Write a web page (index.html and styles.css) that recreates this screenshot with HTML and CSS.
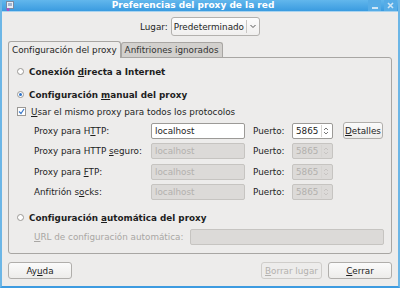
FILE: index.html
```html
<!DOCTYPE html>
<html lang="es">
<head>
    <meta charset="UTF-8">
    <title>Preferencias del proxy de la red</title>
    <link rel="stylesheet" href="styles.css">
</head>
<body>

<div class="window">
    <div class="titlebar">
        <svg class="app-icon" width="10" height="10" viewBox="0 0 10 10">
            <rect x="1.5" y="0.5" width="7" height="7" fill="#e8eef6" stroke="#7a8aa0"/>
            <rect x="3" y="2" width="4" height="3" fill="#9fb4d0"/>
            <circle cx="3" cy="8.5" r="1.5" fill="#b04cc0"/>
        </svg>
        <span class="title">Preferencias del proxy de la red</span>
        <div class="wm-buttons">
            <span class="wm-btn"><span class="wm-min"></span></span>
            <span class="wm-btn">
                <svg width="7" height="7" viewBox="0 0 7 7">
                    <path d="M1 1 L6 6 M6 1 L1 6" stroke="#cfe6f6" stroke-width="1.6"/>
                </svg>
            </span>
        </div>
    </div>

    <div class="content">
        <div class="location">
            <span>Lugar:</span>
            <div class="combo">
                <span class="combo-text">Predeterminado</span>
                <span class="combo-sep"></span>
                <svg width="6" height="5" viewBox="0 0 6 5">
                    <path d="M0.5 1 L3 3.5 L5.5 1" fill="none" stroke="#555" stroke-width="1"/>
                </svg>
            </div>
        </div>

        <div class="tabs">
            <div class="tab active">Configuración del proxy</div>
            <div class="tab">Anfitriones ignorados</div>
        </div>

        <div class="panel">
            <div class="option"><span class="radio"></span><b>Conexión <u>d</u>irecta a Internet</b></div>
            <div class="option manual"><span class="radio on"></span><b>Configuración <u>m</u>anual del proxy</b></div>
            <div class="option check-row">
                <span class="check">
                    <svg width="7" height="7" viewBox="0 0 7 7">
                        <path d="M1 3.5 L3 5.5 L6 1" fill="none" stroke="#3a78c8" stroke-width="1.2"/>
                    </svg>
                </span>
                <span><u>U</u>sar el mismo proxy para todos los protocolos</span>
            </div>

            <div class="proxy-grid">
                <span class="lbl">Proxy para H<u>T</u>TP:</span>
                <span class="entry">localhost</span>
                <span class="lbl port">Puerto:</span>
                <span class="spin"><span>5865</span><svg class="arrows" width="8" height="12" viewBox="0 0 8 12"><path d="M2 5 L4 3 L6 5 M2 7 L4 9 L6 7" fill="none" stroke="currentColor" stroke-width="0.9"/></svg></span>
                <span class="btn details"><u>D</u>etalles</span>

                <span class="lbl">Proxy para HTTP <u>s</u>eguro:</span>
                <span class="entry off">localhost</span>
                <span class="lbl port">Puerto:</span>
                <span class="spin off"><span>5865</span><svg class="arrows" width="8" height="12" viewBox="0 0 8 12"><path d="M2 5 L4 3 L6 5 M2 7 L4 9 L6 7" fill="none" stroke="currentColor" stroke-width="0.9"/></svg></span>
                <span></span>

                <span class="lbl">Proxy para <u>F</u>TP:</span>
                <span class="entry off">localhost</span>
                <span class="lbl port">Puerto:</span>
                <span class="spin off"><span>5865</span><svg class="arrows" width="8" height="12" viewBox="0 0 8 12"><path d="M2 5 L4 3 L6 5 M2 7 L4 9 L6 7" fill="none" stroke="currentColor" stroke-width="0.9"/></svg></span>
                <span></span>

                <span class="lbl">Anfitrión s<u>o</u>cks:</span>
                <span class="entry off">localhost</span>
                <span class="lbl port">Puerto:</span>
                <span class="spin off"><span>5865</span><svg class="arrows" width="8" height="12" viewBox="0 0 8 12"><path d="M2 5 L4 3 L6 5 M2 7 L4 9 L6 7" fill="none" stroke="currentColor" stroke-width="0.9"/></svg></span>
                <span></span>
            </div>

            <div class="option auto"><span class="radio"></span><b>Configuración <u>a</u>utomática del proxy</b></div>
            <div class="url-row">
                <span class="lbl off"><u>U</u>RL de configuración automática:</span>
                <span class="entry off url"></span>
            </div>
        </div>

        <div class="actions">
            <span class="btn">Ay<u>u</u>da</span>
            <span class="spacer"></span>
            <span class="btn disabled"><u>B</u>orrar lugar</span>
            <span class="btn"><u>C</u>errar</span>
        </div>
    </div>
</div>

</body>
</html>
```

FILE: styles.css
```css
    body {
        margin: 0;
        font-family: 'DejaVu Sans', sans-serif;
        font-size: 8.8px;
        color: #1e1e1e;
        background-color: #edeceb;
    }
    .window {
        width: 400px;
        height: 288px;
        box-sizing: border-box;
        border-left: 2px solid #6cb6e6;
        border-right: 2px solid #6cb6e6;
        border-bottom: 2px solid #3d9be0;
        background-color: #edeceb;
        display: flex;
        flex-direction: column;
        overflow: hidden;
    }
    .titlebar {
        height: 11px;
        margin: 0 -2px;
        display: flex;
        align-items: center;
        background: linear-gradient(#62b7ec, #3a9be0);
        border-bottom: 1px solid #a9d3ef;
    }
    .app-icon {
        margin-left: 5px;
        margin-right: 3px;
    }
    .title {
        flex: 1;
        text-align: center;
        color: white;
        font-weight: bold;
        font-size: 9px;
        line-height: 11px;
    }
    .wm-buttons {
        display: flex;
        gap: 3px;
        margin-right: 3px;
    }
    .wm-btn {
        width: 13px;
        height: 11px;
        background-color: #56ace6;
        display: flex;
        align-items: center;
        justify-content: center;
    }
    .wm-min {
        width: 6px;
        height: 2px;
        background-color: #cfe6f6;
        margin-top: 4px;
    }
    .content {
        flex: 1;
        padding: 0 6px;
        display: flex;
        flex-direction: column;
    }
    .location {
        display: flex;
        align-items: center;
        justify-content: center;
        gap: 3px;
        margin-top: 5px;
    }
    .combo {
        display: flex;
        align-items: center;
        height: 19px;
        box-sizing: border-box;
        border: 1px solid #b3b1ae;
        border-radius: 3px;
        background: linear-gradient(#fdfdfd, #f0efee);
        padding: 0 3px 0 2px;
    }
    .combo-sep {
        width: 1px;
        height: 13px;
        background-color: #c9c7c4;
        margin: 0 3px 0 2px;
    }
    .tabs {
        display: flex;
        align-items: flex-end;
        margin-top: 4px;
        height: 17px;
    }
    .tab {
        height: 15px;
        line-height: 15px;
        padding: 0 3px;
        box-sizing: border-box;
        background-color: #d2d0cd;
        border: 1px solid #a8a6a3;
        border-bottom: none;
        border-radius: 3px 3px 0 0;
        color: #333;
    }
    .tab.active {
        height: 17px;
        line-height: 16px;
        background-color: #edeceb;
        margin-bottom: -1px;
        position: relative;
        z-index: 1;
        color: #1e1e1e;
    }
    .panel {
        border: 1px solid #a8a6a3;
        border-radius: 0 3px 3px 3px;
        height: 197px;
        box-sizing: border-box;
        padding: 8px 0 0 8px;
    }
    .option {
        display: flex;
        align-items: center;
        gap: 5px;
        height: 11px;
    }
    .manual {
        margin-top: 12px;
    }
    .check-row {
        margin-top: 6px;
    }
    .radio {
        width: 5px;
        height: 5px;
        border: 1px solid #9a9895;
        border-radius: 50%;
        background-color: white;
        position: relative;
    }
    .radio.on::after {
        content: "";
        position: absolute;
        left: 1px;
        top: 1px;
        width: 3px;
        height: 3px;
        border-radius: 50%;
        background-color: #2c72c7;
    }
    .check {
        width: 7px;
        height: 7px;
        border: 1px solid #9a9895;
        background-color: white;
        display: flex;
    }
    .proxy-grid {
        display: grid;
        grid-template-columns: 117px 94px 47px 41px 50px;
        grid-auto-rows: 16px;
        row-gap: 4.5px;
        margin-top: 5.5px;
        margin-left: 17px;
        align-items: center;
    }
    .proxy-grid .port {
        padding-left: 8px;
    }
    .proxy-grid .btn {
        margin-left: 10px;
    }
    .entry {
        height: 16px;
        box-sizing: border-box;
        border: 1px solid #9c9a97;
        border-radius: 2px;
        background-color: white;
        padding: 0 3px;
        line-height: 14px;
    }
    .entry.off, .spin.off {
        background-color: #dcdad8;
        border-color: #c6c4c1;
        color: #b3b1ae;
    }
    .spin {
        height: 16px;
        box-sizing: border-box;
        border: 1px solid #9c9a97;
        border-radius: 2px;
        background-color: white;
        padding: 0 2px 0 3px;
        line-height: 14px;
        display: flex;
        align-items: center;
        justify-content: space-between;
    }
    .arrows {
        color: #666;
        border-left: 1px solid #d6d4d1;
    }
    .spin.off .arrows {
        color: #c4c2bf;
    }
    .btn {
        height: 17px;
        box-sizing: border-box;
        border: 1px solid #b0aeab;
        border-radius: 3px;
        background: linear-gradient(#fbfbfb, #edecea);
        display: flex;
        align-items: center;
        justify-content: center;
        color: #1e1e1e;
    }
    .btn.disabled {
        color: #b3b1ae;
        background: #edeceb;
        border-color: #cfcdca;
    }
    .auto {
        margin-top: 12px;
    }
    .url-row {
        display: flex;
        align-items: center;
        margin-top: 5.5px;
        margin-left: 17px;
    }
    .lbl.off {
        color: #a9a7a4;
        width: 156px;
    }
    .url {
        width: 194px;
    }
    .actions {
        display: flex;
        gap: 6px;
        margin-top: 8px;
    }
    .actions .btn {
        width: 64px;
    }
    .actions .btn.disabled {
        width: 61px;
    }
    .spacer {
        flex: 1;
    }
```
